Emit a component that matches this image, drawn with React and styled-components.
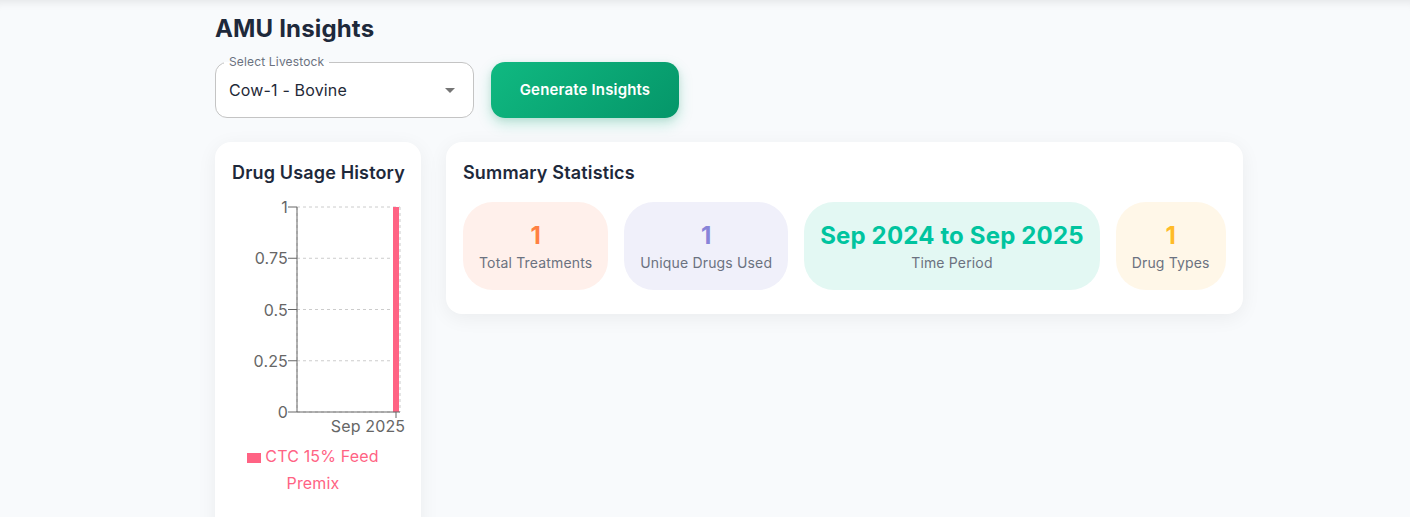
import React from "react";
import styled, { createGlobalStyle } from "styled-components";

const GlobalStyle = createGlobalStyle`
  html, body {
    margin: 0;
    padding: 0;
    background: #f8fafc;
    font-family: Inter, "Noto Sans", "Liberation Sans", sans-serif;
  }
`;

const Page = styled.div`
  min-height: 517px;
  padding: 14px 0 0 215px;
  box-sizing: border-box;
  letter-spacing: 0.01em;
  box-shadow: inset 0 10px 10px -8px rgba(0, 0, 0, 0.09);
`;

const Title = styled.h1`
  margin: 0;
  font-size: 24px;
  line-height: 30px;
  font-weight: 700;
  color: #1e293b;
`;

const Controls = styled.div`
  display: flex;
  align-items: center;
  gap: 17px;
  margin-top: 18px;
`;

const SelectBox = styled.div`
  position: relative;
  width: 259px;
  height: 56px;
  box-sizing: border-box;
  border: 1px solid #c4c4c4;
  border-radius: 12px;
  background: #fff;
  display: flex;
  align-items: center;
  padding: 0 14px 0 13px;
  font-size: 16px;
  color: #1f2937;
`;

const SelectLabel = styled.span`
  position: absolute;
  top: -8px;
  left: 8px;
  padding: 0 5px;
  font-size: 12px;
  line-height: 14px;
  color: #6b7280;
  background: linear-gradient(#f8fafc 50%, #fff 50%);
`;

const Caret = styled.span`
  margin-left: auto;
  width: 0;
  height: 0;
  border-left: 5px solid transparent;
  border-right: 5px solid transparent;
  border-top: 5px solid #757575;
  margin-right: 4px;
`;

const GenerateButton = styled.button`
  width: 188px;
  height: 56px;
  border: none;
  border-radius: 14px;
  background: linear-gradient(135deg, #10b981 0%, #059669 100%);
  color: #fff;
  font-family: inherit;
  letter-spacing: inherit;
  font-size: 15px;
  font-weight: 600;
  padding: 0 0 2px;
  box-shadow: 0 6px 14px rgba(16, 185, 129, 0.25), 0 2px 6px rgba(0, 0, 0, 0.08);
  cursor: pointer;
`;

const CardsRow = styled.div`
  display: flex;
  align-items: flex-start;
  gap: 25px;
  margin-top: 24px;
`;

const Card = styled.section`
  width: ${(p) => p.$width}px;
  box-sizing: border-box;
  background: #fff;
  border-radius: 16px;
  padding: 17px 17px 24px;
  box-shadow: 0 4px 20px rgba(0, 0, 0, 0.06);
  min-height: ${(p) => p.$minHeight || 0}px;
`;

const CardTitle = styled.h2`
  margin: 0;
  font-size: 18px;
  line-height: 28px;
  font-weight: 600;
  color: #1e293b;
  white-space: nowrap;
`;

const ChartWrap = styled.div`
  margin-top: 8px;
`;

const Legend = styled.div`
  margin-top: 0;
  padding-right: 10px;
  text-align: center;
  font-size: 16px;
  line-height: 27px;
  color: #ff6384;
`;

const LegendSwatch = styled.span`
  display: inline-block;
  width: 14px;
  height: 10px;
  background: #ff6384;
  margin-right: 4px;
  vertical-align: -1px;
`;

const Tiles = styled.div`
  display: flex;
  gap: 16px;
  margin-top: 15px;
`;

const Tile = styled.div`
  background: ${(p) => p.$bg};
  border-radius: 30px;
  padding: 19px 16px 17px;
  text-align: center;
  white-space: nowrap;
`;

const TileValue = styled.div`
  font-size: 24px;
  line-height: 30px;
  font-weight: 700;
  color: ${(p) => p.$color};
`;

const TileLabel = styled.div`
  margin-top: 2px;
  font-size: 14px;
  line-height: 20px;
  color: #6b7280;
`;

const stats = [
  { value: "1", label: "Total Treatments", color: "#FF8042", bg: "#fff0eb" },
  { value: "1", label: "Unique Drugs Used", color: "#8884d8", bg: "#f0f0fa" },
  { value: "Sep 2024 to Sep 2025", label: "Time Period", color: "#00C49F", bg: "#e3f8f3" },
  { value: "1", label: "Drug Types", color: "#FFBB28", bg: "#fff7e8" },
];

function UsageChart() {
  const left = 65;
  const right = 168;
  const top = 12;
  const bottom = 217;
  const ticks = [1, 0.75, 0.5, 0.25, 0];
  const yOf = (v) => bottom - (bottom - top) * v;
  return (
    <svg width="175" height="244" viewBox="0 0 175 244">
      <g stroke="#ccc" strokeDasharray="3 3">
        {ticks.map((t) => (
          <line key={t} x1={left} x2={right} y1={yOf(t)} y2={yOf(t)} />
        ))}
        <line x1={right} x2={right} y1={top} y2={bottom} />
        <line x1={left} x2={left} y1={top} y2={bottom} />
      </g>
      <rect x="161" y={top} width="6" height={bottom - top} fill="#ff6384" />
      <g stroke="#666">
        <line x1={left} x2={left} y1={top} y2={bottom} />
        <line x1={left} x2={right} y1={bottom} y2={bottom} />
        {ticks.map((t) => (
          <line key={t} x1={left - 9} x2={left} y1={yOf(t)} y2={yOf(t)} />
        ))}
        <line x1="164" x2="164" y1={bottom} y2={bottom + 6} />
      </g>
      <g fill="#666" fontSize="16" fontFamily="Inter, sans-serif" textAnchor="end">
        {ticks.map((t) => (
          <text key={t} x={left - 9} y={yOf(t) + 6}>
            {t}
          </text>
        ))}
      </g>
      <text x="136" y="237" fill="#666" fontSize="16" fontFamily="Inter, sans-serif" textAnchor="middle">
        Sep 2025
      </text>
    </svg>
  );
}

export default function App() {
  return (
    <Page>
      <GlobalStyle />
      <Title>AMU Insights</Title>
      <Controls>
        <SelectBox>
          <SelectLabel>Select Livestock</SelectLabel>
          Cow-1 - Bovine
          <Caret />
        </SelectBox>
        <GenerateButton>Generate Insights</GenerateButton>
      </Controls>
      <CardsRow>
        <Card $width={206} $minHeight={400}>
          <CardTitle>Drug Usage History</CardTitle>
          <ChartWrap>
            <UsageChart />
          </ChartWrap>
          <Legend>
            <LegendSwatch />
            CTC 15% Feed
            <br />
            Premix
          </Legend>
        </Card>
        <Card $width={797}>
          <CardTitle>Summary Statistics</CardTitle>
          <Tiles>
            {stats.map((s) => (
              <Tile key={s.label} $bg={s.bg}>
                <TileValue $color={s.color}>{s.value}</TileValue>
                <TileLabel>{s.label}</TileLabel>
              </Tile>
            ))}
          </Tiles>
        </Card>
      </CardsRow>
    </Page>
  );
}
